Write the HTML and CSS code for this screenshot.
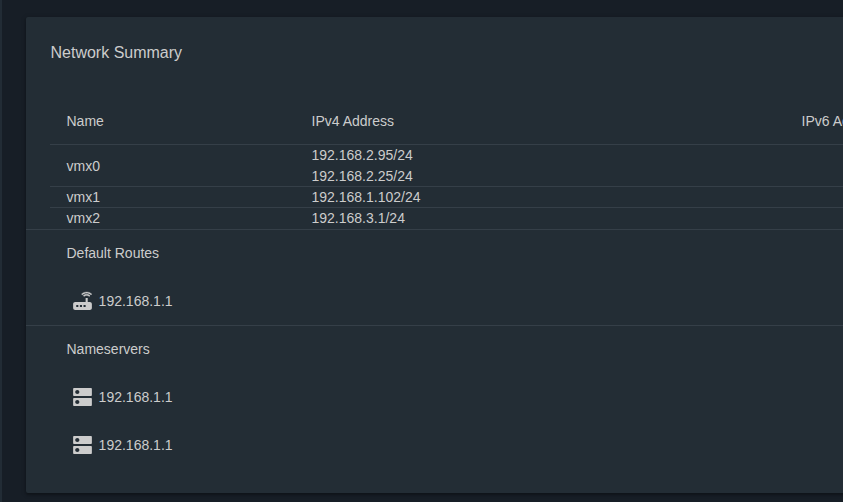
FILE: index.html
```html
<!DOCTYPE html>
<html lang="en">

<head>
    <meta charset="UTF-8" />
    <meta name="viewport" content="width=device-width, initial-scale=1.0" />
    <title>Network Summary</title>
    <link rel="stylesheet" href="styles.css">
</head>

<body>
    <!-- shared icons -->
    <svg class="icon-defs" aria-hidden="true">
        <symbol id="router" viewBox="0 0 24 24" preserveAspectRatio="none">
            <path class="waves" d="M20.2 5.9l.8-.8C19.6 3.7 17.8 3 16 3s-3.6.7-5 2.1l.8.8C13 4.8 14.5 4.2 16 4.2s3 .6 4.2 1.7zm-.9.8c-.9-.9-2.1-1.4-3.3-1.4s-2.4.5-3.3 1.4l.8.8c.7-.7 1.6-1 2.5-1 .9 0 1.8.3 2.5 1l.8-.8z" />
            <path d="M19 13h-2V9h-2v4H5c-1.1 0-2 .9-2 2v4c0 1.1.9 2 2 2h14c1.1 0 2-.9 2-2v-4c0-1.1-.9-2-2-2zM8 18H6v-2h2v2zm3.5 0h-2v-2h2v2zm3.5 0h-2v-2h2v2z" />
        </symbol>
        <symbol id="dns" viewBox="0 0 24 24" preserveAspectRatio="none">
            <path d="M20 13H4c-.55 0-1 .45-1 1v6c0 .55.45 1 1 1h16c.55 0 1-.45 1-1v-6c0-.55-.45-1-1-1zM7 19c-1.1 0-2-.9-2-2s.9-2 2-2 2 .9 2 2-.9 2-2 2zM20 3H4c-.55 0-1 .45-1 1v6c0 .55.45 1 1 1h16c.55 0 1-.45 1-1V4c0-.55-.45-1-1-1zM7 9c-1.1 0-2-.9-2-2s.9-2 2-2 2 .9 2 2-.9 2-2 2z" />
        </symbol>
    </svg>

    <div class="card">
        <h3 class="card-title">Network Summary</h3>

        <div class="table">
            <div class="row head">
                <div>Name</div>
                <div>IPv4 Address</div>
                <div>IPv6 Address</div>
            </div>
            <div class="row">
                <div>vmx0</div>
                <div>192.168.2.95/24<br>192.168.2.25/24</div>
                <div></div>
            </div>
            <div class="row">
                <div>vmx1</div>
                <div>192.168.1.102/24</div>
                <div></div>
            </div>
            <div class="row">
                <div>vmx2</div>
                <div>192.168.3.1/24</div>
                <div></div>
            </div>
        </div>

        <div class="section">
            <h4 class="section-title">Default Routes</h4>
            <div class="item"><svg class="icon"><use href="#router" /></svg>192.168.1.1</div>
        </div>

        <div class="section">
            <h4 class="section-title">Nameservers</h4>
            <div class="item"><svg class="icon"><use href="#dns" /></svg>192.168.1.1</div>
            <div class="item"><svg class="icon"><use href="#dns" /></svg>192.168.1.1</div>
        </div>
    </div>
</body>

</html>
```
FILE: styles.css
```css
* {
    box-sizing: border-box;
}

body {
    font-family: "Liberation Sans", Arial, sans-serif;
    font-size: 14px;
    line-height: 21px;
    background-color: #171e26;
    color: #cccccc;
    margin: 0;
    padding: 17px 0 9px 24px;
    height: 502px;
    border-left: 2px solid #222c35;
    overflow: hidden;
}

.icon-defs {
    display: none;
}

.card {
    width: 1270px;
    background-color: #232d35;
    border-radius: 2px;
    padding-bottom: 24px;
    box-shadow: 0 2px 2px rgba(0, 0, 0, 0.2), 0 1px 5px rgba(0, 0, 0, 0.25);
}

.card-title {
    margin: 0;
    padding: 24px 24px 34px 24.5px;
    font-size: 16px;
    font-weight: 400;
    line-height: 24px;
}

.table {
    margin: 0 24px;
}

.row {
    display: grid;
    grid-template-columns: 245px 490px 1fr;
    align-items: center;
    padding-left: 16.5px;
    box-shadow: inset 0 -1px #353f48;
}

.row:last-child {
    box-shadow: none;
}

.head {
    height: 46px;
    padding-bottom: 2px;
}

.section {
    box-shadow: inset 0 1px #353f48;
}

.section-title,
.item {
    display: flex;
    align-items: center;
    height: 48px;
    margin: 0;
    padding-left: 40.5px;
    font-size: 14px;
    font-weight: 400;
}

.item {
    padding-left: 40px;
}

.icon {
    width: 25px;
    height: 24px;
    margin: 0 3.6px 0 4px;
    fill: #cccccc;
}

.waves {
    stroke: #cccccc;
    stroke-width: 0.3;
}
```
